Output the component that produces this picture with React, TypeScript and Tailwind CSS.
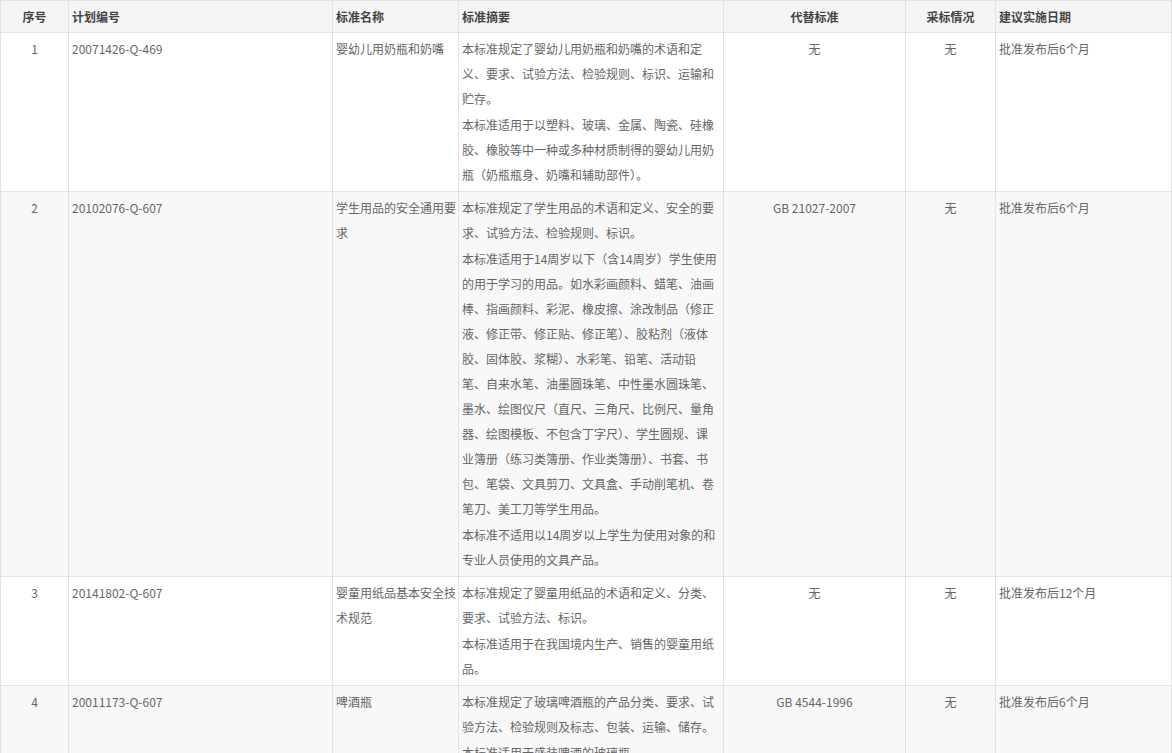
const rows = [
  {
    id: '1',
    code: '20071426-Q-469',
    name: ['婴幼儿用奶瓶和奶嘴'],
    summary: [
      ['本标准规定了婴幼儿用奶瓶和奶嘴的术语和定', '义、要求、试验方法、检验规则、标识、运输和', '贮存。'],
      ['本标准适用于以塑料、玻璃、金属、陶瓷、硅橡', '胶、橡胶等中一种或多种材质制得的婴幼儿用奶', '瓶（奶瓶瓶身、奶嘴和辅助部件）。'],
    ],
    replace: '无',
    adopt: '无',
    date: '批准发布后6个月',
    bg: 'bg-white',
  },
  {
    id: '2',
    code: '20102076-Q-607',
    name: ['学生用品的安全通用要', '求'],
    summary: [
      ['本标准规定了学生用品的术语和定义、安全的要', '求、试验方法、检验规则、标识。'],
      [
        '本标准适用于14周岁以下（含14周岁）学生使用',
        '的用于学习的用品。如水彩画颜料、蜡笔、油画',
        '棒、指画颜料、彩泥、橡皮擦、涂改制品（修正',
        '液、修正带、修正贴、修正笔）、胶粘剂（液体',
        '胶、固体胶、浆糊）、水彩笔、铅笔、活动铅',
        '笔、自来水笔、油墨圆珠笔、中性墨水圆珠笔、',
        '墨水、绘图仪尺（直尺、三角尺、比例尺、量角',
        '器、绘图模板、不包含丁字尺）、学生圆规、课',
        '业簿册（练习类簿册、作业类簿册）、书套、书',
        '包、笔袋、文具剪刀、文具盒、手动削笔机、卷',
        '笔刀、美工刀等学生用品。',
      ],
      ['本标准不适用以14周岁以上学生为使用对象的和', '专业人员使用的文具产品。'],
    ],
    replace: 'GB 21027-2007',
    adopt: '无',
    date: '批准发布后6个月',
    bg: 'bg-[#f8f8f8]',
  },
  {
    id: '3',
    code: '20141802-Q-607',
    name: ['婴童用纸品基本安全技', '术规范'],
    summary: [
      ['本标准规定了婴童用纸品的术语和定义、分类、', '要求、试验方法、标识。'],
      ['本标准适用于在我国境内生产、销售的婴童用纸', '品。'],
    ],
    replace: '无',
    adopt: '无',
    date: '批准发布后12个月',
    bg: 'bg-white',
  },
  {
    id: '4',
    code: '20011173-Q-607',
    name: ['啤酒瓶'],
    summary: [
      ['本标准规定了玻璃啤酒瓶的产品分类、要求、试', '验方法、检验规则及标志、包装、运输、储存。'],
      ['本标准适用于盛装啤酒的玻璃瓶。'],
    ],
    replace: 'GB 4544-1996',
    adopt: '无',
    date: '批准发布后6个月',
    bg: 'bg-[#f8f8f8]',
  },
];

const td = 'border border-[#e2e2e2] px-[3px] py-[3px] align-top';
const th = 'border border-[#e2e2e2] px-[3px] h-[32px] font-bold text-[#444]';

export default function App() {
  return (
    <div className="w-[1172px] h-[753px] bg-white overflow-hidden" style={{ fontFamily: '"Microsoft YaHei", "Noto Sans CJK SC", sans-serif' }}>
      <table className="border-collapse table-fixed w-[1171px] text-[12px] text-[#666] leading-[25px]">
        <colgroup>
          <col className="w-[68px]" />
          <col className="w-[264px]" />
          <col className="w-[126px]" />
          <col className="w-[265px]" />
          <col className="w-[182px]" />
          <col className="w-[90px]" />
          <col className="w-[176px]" />
        </colgroup>
        <thead>
          <tr className="bg-[#f5f5f5]">
            <th className={`${th} text-center`}>序号</th>
            <th className={`${th} text-left`}>计划编号</th>
            <th className={`${th} text-left`}>标准名称</th>
            <th className={`${th} text-left`}>标准摘要</th>
            <th className={`${th} text-center`}>代替标准</th>
            <th className={`${th} text-center`}>采标情况</th>
            <th className={`${th} text-left`}>建议实施日期</th>
          </tr>
        </thead>
        <tbody>
          {rows.map((r) => (
            <tr key={r.id} className={r.bg}>
              <td className={`${td} text-center`}>{r.id}</td>
              <td className={td}>{r.code}</td>
              <td className={`${td} whitespace-nowrap`}>
                {r.name.map((l, i) => (
                  <div key={i}>{l}</div>
                ))}
              </td>
              <td className={`${td} whitespace-nowrap`}>
                {r.summary.map((p, i) => (
                  <p key={i} className="mb-[1px]">
                    {p.map((l, j) => (
                      <span key={j} className="block">{l}</span>
                    ))}
                  </p>
                ))}
              </td>
              <td className={`${td} text-center`}>{r.replace}</td>
              <td className={`${td} text-center`}>{r.adopt}</td>
              <td className={td}>{r.date}</td>
            </tr>
          ))}
        </tbody>
      </table>
    </div>
  );
}
